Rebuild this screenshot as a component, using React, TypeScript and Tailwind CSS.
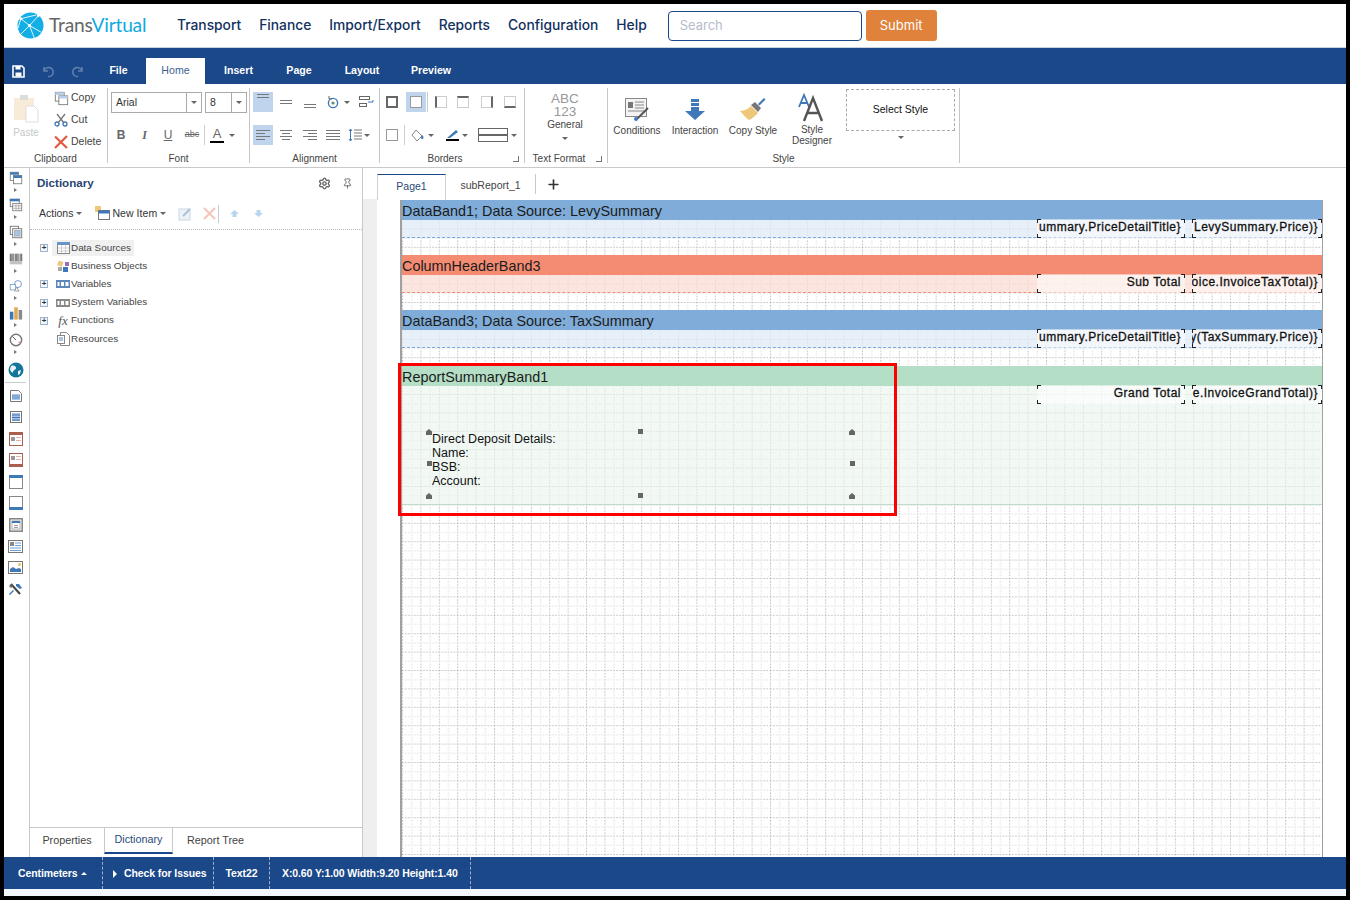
import { Plus, Pin, Settings } from 'lucide-react'
import type { ReactNode } from 'react'

const NAV = ['Transport', 'Finance', 'Import/Export', 'Reports', 'Configuration', 'Help']
const TABS = [
  { label: 'File', w: 'w-[55px]' },
  { label: 'Home', w: 'w-[59px]' },
  { label: 'Insert', w: 'w-[67px]' },
  { label: 'Page', w: 'w-[54px]' },
  { label: 'Layout', w: 'w-[72px]' },
  { label: 'Preview', w: 'w-[66px]' },
]

function Caret({ className = '' }: { className?: string }) {
  return <span className={`inline-block w-0 h-0 border-x-[3px] border-x-transparent border-t-[3px] border-t-[#666] ${className}`} />
}

function Group({ label, w, corner, children }: { label: string; w: string; corner?: boolean; children: ReactNode }) {
  return (
    <div className={`${w} shrink-0 h-[75px] border-r border-[#c6c6c6] flex flex-col relative`}>
      <div className="flex-1 relative">{children}</div>
      <div className={`h-[10px] text-center text-[10px] leading-[12px] text-[#444] whitespace-nowrap ${corner ? 'pr-[14px]' : ''}`}>{label}</div>
      {corner && <span className="absolute right-[5px] bottom-[1px] w-[6px] h-[6px] border-r border-b border-[#777]" />}
    </div>
  )
}

function AlignIcon({ kind }: { kind: string }) {
  const lines = kind === 'left' ? [[1, 14], [1, 9], [1, 14], [1, 9]] : kind === 'center' ? [[2, 12], [4, 8], [2, 12], [4, 8]] : kind === 'right' ? [[1, 14], [6, 9], [1, 14], [6, 9]] : [[1, 14], [1, 14], [1, 14], [1, 14]]
  return (
    <svg width="16" height="12" viewBox="0 0 16 12">
      {lines.map((l, i) => <rect key={i} x={l[0]} y={i * 3 + 1} width={l[1]} height="1" fill="#777" />)}
    </svg>
  )
}

function VAlign({ pos }: { pos: number }) {
  return (
    <svg width="14" height="14" viewBox="0 0 14 14">
      <rect x="1" y={pos} width="12" height="1" fill="#777" />
      <rect x="1" y={pos + 3} width="12" height="1" fill="#777" />
    </svg>
  )
}

function BorderBox({ side, on }: { side: string; on?: boolean }) {
  const cls = side === 'all' ? 'border-2 border-[#666]'
    : side === 'left' ? 'border border-[#ccc] border-l-2 border-l-[#666]'
    : side === 'top' ? 'border border-[#ccc] border-t-2 border-t-[#666]'
    : side === 'right' ? 'border border-[#ccc] border-r-2 border-r-[#666]'
    : side === 'bottom' ? 'border border-[#ccc] border-b-2 border-b-[#666]'
    : 'border border-[#999]'
  return (
    <div className={`w-[20px] h-[20px] flex items-center justify-center ${on ? 'bg-[#c0d4ee]' : ''}`}>
      <span className={`block w-[12px] h-[12px] bg-white ${cls}`} />
    </div>
  )
}

function SmallDoc({ tone }: { tone: string }) {
  return (
    <svg width="15" height="15" viewBox="0 0 17 17">
      <rect x="1.5" y="1.5" width="10" height="10" fill="#fff" stroke="#777" />
      <rect x="1.5" y="1.5" width="10" height="3" fill={tone} />
      <rect x="5.5" y="5.5" width="10" height="10" fill="#fff" stroke="#777" />
      <rect x="5.5" y="5.5" width="10" height="3" fill={tone} />
    </svg>
  )
}

function ToolIcon({ n }: { n: number }) {
  const blue = '#3f78b8'
  const brown = '#a9604f'
  if (n === 0) return <SmallDoc tone={blue} />
  if (n === 1) return (
    <svg width="17" height="17" viewBox="0 0 17 17">
      <rect x="1.5" y="1.5" width="11" height="9" fill="#fff" stroke="#777" /><rect x="1" y="1" width="12" height="3" fill={blue} />
      <rect x="4.5" y="6.5" width="11" height="9" fill="#fff" stroke="#777" /><path d="M5 9.5h10M5 12.5h10M8.5 7v8M12 7v8" stroke="#888" strokeWidth=".7" />
    </svg>
  )
  if (n === 2) return (
    <svg width="17" height="17" viewBox="0 0 17 17">
      <rect x="1.5" y="1.5" width="10" height="10" fill="#fff" stroke="#666" /><rect x="4.5" y="4.5" width="11" height="11" fill="#fff" stroke="#666" />
      <rect x="6.5" y="6.5" width="7" height="7" fill="#a9c4e4" stroke="#888" strokeWidth=".6" />
    </svg>
  )
  if (n === 3) return (
    <svg width="17" height="15" viewBox="0 0 17 15">
      {[1, 3, 4.5, 7, 9, 10.5, 13, 15].map(x => <rect key={x} x={x} y="1" width={x % 2 ? 1 : 1.4} height="9" fill="#333" />)}
      <path d="M1 10h15v4H1z" fill="#999" opacity=".6" />
    </svg>
  )
  if (n === 4) return (
    <svg width="18" height="17" viewBox="0 0 18 17" fill="#fff" stroke="#4f86c4">
      <circle cx="11.5" cy="6" r="4.5" /><rect x="1.5" y="6.5" width="7" height="7" stroke="#6f9acb" /><path d="M10 10l3 5h-6z" stroke="#888" />
    </svg>
  )
  if (n === 5) return (
    <svg width="16" height="15" viewBox="0 0 16 15">
      <rect x="1" y="6" width="4" height="9" fill={blue} /><rect x="6" y="1" width="4" height="14" fill="#e0a94e" /><rect x="11" y="4" width="4" height="11" fill="#8a8a8a" />
    </svg>
  )
  if (n === 6) return (
    <svg width="16" height="16" viewBox="0 0 16 16">
      <circle cx="8" cy="8" r="6.5" fill="#fff" stroke="#777" strokeWidth="1.6" /><path d="M8 8L4 4" stroke="#444" /><path d="M11 11l2-1" stroke="#d0583f" />
    </svg>
  )
  if (n === 7) return (
    <svg width="16" height="16" viewBox="0 0 16 16">
      <circle cx="8" cy="8" r="7.5" fill="#14759b" /><path d="M3 4c3-1 5 0 5 2s-3 2-3 4-3-1-3-3zM10 9l3-1-1 4-2 1z" fill="#e8f2f5" />
    </svg>
  )
  if (n === 8) return (
    <svg width="14" height="14" viewBox="0 0 14 14">
      <path d="M1.5 1.5h8l3 3v8h-11z" fill="#fff" stroke="#777" /><rect x="3" y="5" width="8" height="6" fill="#a9c4e4" /><path d="M3 7h8M3 9h8" stroke="#5d8fc8" />
    </svg>
  )
  if (n === 9) return (
    <svg width="14" height="14" viewBox="0 0 14 14">
      <rect x="1.5" y="1.5" width="11" height="11" fill="#fff" stroke="#777" /><rect x="3" y="3" width="8" height="8" fill="#a9c4e4" /><path d="M3 5h8M3 7.5h8M3 10h8" stroke="#3f78b8" />
    </svg>
  )
  if (n === 10 || n === 11) return (
    <svg width="14" height="14" viewBox="0 0 14 14">
      <rect x=".5" y=".5" width="13" height="13" fill="#fff" stroke={brown} /><rect x="0" y={n === 10 ? 0 : 11} width="14" height="3" fill={brown} />
      <rect x="2" y={n === 10 ? 5 : 3} width="4" height="4" fill="#999" /><rect x="7" y={n === 10 ? 5 : 3} width="5" height="1" fill="#e3b3a8" /><rect x="7" y={n === 10 ? 8 : 6} width="5" height="1" fill="#e3b3a8" />
    </svg>
  )
  if (n === 12 || n === 13) return (
    <svg width="14" height="14" viewBox="0 0 14 14">
      <rect x=".5" y=".5" width="13" height="13" fill="#fff" stroke="#888" /><rect x="0" y={n === 12 ? 0 : 11} width="14" height="3" fill={blue} />
    </svg>
  )
  if (n === 14) return (
    <svg width="14" height="14" viewBox="0 0 14 14">
      <rect x=".75" y=".75" width="12.5" height="12.5" fill="#eee" stroke="#888" strokeWidth="1.5" /><rect x="3" y="3" width="8" height="8" fill="#fff" stroke="#777" strokeWidth=".5" /><rect x="3" y="3" width="8" height="2" fill={blue} /><path d="M5 7.5h4M5 9.5h4" stroke="#999" />
    </svg>
  )
  if (n === 15) return (
    <svg width="15" height="13" viewBox="0 0 15 13">
      <rect x=".5" y=".5" width="14" height="12" fill="#fff" stroke="#777" /><rect x="2" y="2" width="4" height="4" fill="#888" /><path d="M7 3h6M7 5.5h6M2 8h11M2 10.5h11" stroke="#6d9ed4" />
    </svg>
  )
  if (n === 16) return (
    <svg width="15" height="13" viewBox="0 0 15 13">
      <rect x=".5" y=".5" width="14" height="12" fill="#fff" stroke="#777" /><circle cx="11.5" cy="3.5" r="1.5" fill="#f0c060" /><path d="M2 11V8l3-2 3 2 3-1 2 1v3z" fill={blue} />
    </svg>
  )
  return (
    <svg width="15" height="13" viewBox="0 0 15 13">
      <path d="M3 1l9 10" stroke="#444" strokeWidth="2" /><path d="M5 7l-4 4 1 1 4-4zM8 1h3l3 4-2 1-4-3z" fill={blue} /><path d="M1 3l2-2 2 2-2 2z" fill="#666" />
    </svg>
  )
}

function TreeRow({ label, expand, active, icon }: { label: string; expand?: boolean; active?: boolean; icon: ReactNode }) {
  return (
    <div className="flex items-center h-[18.2px] text-[9.9px] text-[#444]">
      <span className="w-[18px] pl-[6px]">
        {expand && (
          <span className="flex w-[8px] h-[8px] border border-[#9db3cf] bg-[#f2f6fb] items-center justify-center text-[8px] leading-none text-[#333] font-bold">+</span>
        )}
      </span>
      <span className={`flex items-center h-[16px] pl-[3px] pr-[3px] ${active ? 'bg-[#f0f0f0]' : ''}`}>
        <span className="w-[16px] flex justify-center">{icon}</span>
        <span>{label}</span>
      </span>
    </div>
  )
}

function TextBox({ left, width, text }: { left: number; width: number; text: string }) {
  return (
    <div className="absolute top-[-1px] h-[19px] bg-white/50 overflow-hidden" style={{ left, width }}>
      <div className="absolute inset-0 flex items-center justify-end pr-[4px] pb-[3px] text-[12px] tracking-[0.5px] whitespace-nowrap text-[#111] [-webkit-text-stroke:0.3px_#111]">
        {text}
      </div>
      <span className="absolute left-0 top-0 w-[4px] h-[4px] border-l border-t border-[#222]" />
      <span className="absolute right-0 top-0 w-[4px] h-[4px] border-r border-t border-[#222]" />
      <span className="absolute left-0 bottom-0 w-[4px] h-[4px] border-l border-b border-[#222]" />
      <span className="absolute right-0 bottom-0 w-[4px] h-[4px] border-r border-b border-[#222]" />
    </div>
  )
}

function Band({ title, head, body, line, cells, gap }: { title: string; head: string; body: string; line: string; cells: [string, string]; gap: string }) {
  return (
    <div className={`${gap} relative`}>
      <div className={`${head} h-[20px] text-[14.4px] leading-[22px] text-[#1b1b1b]`}>{title}</div>
      <div className={`${body} ${line} h-[18px] border-b border-dashed relative`}>
        <TextBox left={635} width={148} text={cells[0]} />
        <TextBox left={790} width={130} text={cells[1]} />
      </div>
    </div>
  )
}

function Handle({ className, corner }: { className: string; corner?: boolean }) {
  if (corner) {
    return <span className={`absolute w-[6px] h-[6px] bg-[#666] [clip-path:polygon(50%_0,100%_40%,100%_100%,0_100%,0_40%)] ${className}`} />
  }
  return <span className={`absolute w-[5px] h-[5px] bg-[#666] ${className}`} />
}

export default function App() {
  return (
    <div className="w-[1350px] h-[900px] bg-black p-[4px] overflow-hidden [font-family:'Liberation_Sans',Arial,sans-serif]">
      <div className="w-[1342px] h-[892px] bg-white flex flex-col">
        {/* top nav */}
        <header className="h-[43px] shrink-0 flex items-center bg-white [font-family:Inter,sans-serif]">
          <div className="w-[173px] pl-[13px] flex items-center">
            <svg width="27" height="27" viewBox="0 0 28 28">
              <circle cx="14" cy="14" r="13.5" fill="#14aee6" />
              <path d="M4 7l16 -4M4 7l9 7 10 -11M13 14l-9 9M13 14l12 7M13 14l5 13M4 7l-3 10" stroke="#fff" strokeWidth="0.9" fill="none" />
              <circle cx="4" cy="7" r="1.6" fill="#fff" /><circle cx="13" cy="14" r="1.6" fill="#fff" /><circle cx="22" cy="4" r="1.4" fill="#fff" />
            </svg>
            <span className="ml-[5px] text-[19.2px] tracking-[-0.2px] text-[#666] [font-family:Lato,sans-serif]">Trans<span className="text-[#11a9e2]">Virtual</span></span>
          </div>
          <nav className="flex gap-[18px] text-[13.8px] font-medium text-[#11315f]">
            {NAV.map(n => <span key={n}>{n}</span>)}
          </nav>
          <div className="ml-[21px] w-[194px] h-[30px] border border-[#1a4788] rounded-[4px] pl-[11px] flex items-center text-[13px] text-[#b4bccb]">Search</div>
          <button className="ml-[4px] w-[71px] h-[31px] rounded-[3px] bg-[#e0823b] text-white text-[13px]">Submit</button>
        </header>

        {/* ribbon tabs */}
        <div className="h-[37px] shrink-0 bg-[#1b4889] flex items-end border-t border-[#c9d3e0]">
          <div className="w-[87px] h-[26px] flex items-center pl-[8px] gap-[16px]">
            <svg width="13" height="13" viewBox="0 0 13 13"><path d="M1 1h9l2 2v9H1z" fill="none" stroke="#fff" strokeWidth="1.6" /><rect x="3.5" y="1" width="5" height="3.5" fill="#fff" /><rect x="3.5" y="7.5" width="6" height="4" fill="#fff" /></svg>
            <svg width="14" height="13" viewBox="0 0 14 13" fill="none" stroke="#5f7fad" strokeWidth="1.6"><path d="M3 2v4h4M3.3 6A4.5 4.5 0 1 1 7 11.5" /></svg>
            <svg width="14" height="13" viewBox="0 0 14 13" fill="none" stroke="#5f7fad" strokeWidth="1.6"><path d="M11 2v4H7M10.7 6A4.5 4.5 0 1 0 7 11.5" /></svg>
          </div>
          {TABS.map(t => (
            <div key={t.label} className={`${t.w} h-[26px] flex items-center justify-center text-[10.6px] font-bold ${t.label === 'Home' ? 'bg-white text-[#3b5f93] font-normal' : 'text-white'}`}>{t.label}</div>
          ))}
        </div>

        {/* ribbon */}
        <div className="h-[84px] shrink-0 bg-white border-b border-[#c9c9c9] flex pt-[4px]">
          <Group label="Clipboard" w="w-[104px]">
            <div className="absolute left-[8px] top-[6px] flex flex-col items-center">
              <svg width="28" height="30" viewBox="0 0 28 30"><rect x="2" y="4" width="20" height="22" fill="#f8ecd9" /><rect x="8" y="1" width="8" height="5" fill="#ddd" /><path d="M14 12h8l4 4v12H14z" fill="#fff" stroke="#ddd" /></svg>
              <span className="text-[10px] text-[#c8c8c8] mt-[1px]">Paste</span>
            </div>
            <div className="absolute left-[50px] top-[2px] flex flex-col gap-[6px] text-[10.5px] text-[#444]">
              <div className="flex items-center h-[16px] gap-[2px]"><SmallDoc tone="#b9cde6" /><span>Copy</span></div>
              <div className="flex items-center h-[16px] gap-[3px]">
                <svg width="14" height="14" viewBox="0 0 14 14" fill="none"><path d="M3 1l7 9M11 1L4 10" stroke="#777" strokeWidth="1.3" /><circle cx="3" cy="11" r="2" stroke="#3f78b8" strokeWidth="1.3" /><circle cx="11" cy="11" r="2" stroke="#3f78b8" strokeWidth="1.3" /></svg>
                <span>Cut</span>
              </div>
              <div className="flex items-center h-[16px] gap-[3px]">
                <svg width="14" height="14" viewBox="0 0 14 14"><path d="M1 1.5L13 13M13 1L1 13" stroke="#e2583e" strokeWidth="2.2" /></svg>
                <span>Delete</span>
              </div>
            </div>
          </Group>
          <Group label="Font" w="w-[142px]">
            <div className="absolute left-[3px] top-[4px] flex gap-[3px]">
              <div className="w-[91px] h-[21px] border border-[#aaa] flex text-[10.5px] text-[#333]"><span className="flex-1 pl-[4px] leading-[19px]">Arial</span><span className="w-[15px] border-l border-[#aaa] flex items-center justify-center"><Caret /></span></div>
              <div className="w-[42px] h-[21px] border border-[#aaa] flex text-[10.5px] text-[#333]"><span className="flex-1 pl-[4px] leading-[19px]">8</span><span className="w-[15px] border-l border-[#aaa] flex items-center justify-center"><Caret /></span></div>
            </div>
            <div className="absolute left-[1px] top-[37px] flex items-center h-[20px] text-[#666]">
              <span className="w-[24px] text-center font-bold text-[12px]">B</span>
              <span className="w-[23px] text-center italic font-bold text-[12px] [font-family:'Liberation_Serif',serif]">I</span>
              <span className="w-[24px] text-center underline text-[12px]">U</span>
              <span className="w-[24px] text-center line-through text-[9px]">abc</span>
              <span className="w-[1px] h-[20px] bg-[#ccc]" />
              <span className="ml-[5px] w-[14px] text-center text-[13px] leading-[14px] border-b-2 border-black">A</span>
              <Caret className="ml-[5px]" />
            </div>
          </Group>
          <Group label="Alignment" w="w-[130px]">
            <div className="absolute left-[3px] top-[4px] flex items-center h-[20px]">
              <div className="w-[20px] h-[20px] bg-[#c0d4ee] flex justify-center"><VAlign pos={2} /></div>
              <div className="ml-[3px] w-[20px] flex justify-center"><VAlign pos={5} /></div>
              <div className="ml-[4px] w-[20px] flex justify-center"><VAlign pos={9} /></div>
              <svg className="ml-[6px]" width="14" height="14" viewBox="0 0 14 14" fill="none"><circle cx="7" cy="8" r="4.6" stroke="#3f78b8" strokeWidth="1.4" /><circle cx="7" cy="8" r="1.6" fill="#5d8f7a" /><path d="M3 1v3h3" stroke="#666" /></svg>
              <Caret className="ml-[4px]" />
              <svg className="ml-[9px]" width="15" height="14" viewBox="0 0 15 14" fill="none" stroke="#666"><rect x=".5" y="1.5" width="10" height="3" /><rect x=".5" y="8.5" width="7" height="3" /><path d="M14 5v2H9" stroke="#3f78b8" /></svg>
            </div>
            <div className="absolute left-[3px] top-[37px] flex items-center h-[20px]">
              <div className="w-[20px] h-[20px] bg-[#c0d4ee] flex items-center justify-center"><AlignIcon kind="left" /></div>
              <div className="ml-[3px] w-[20px] flex justify-center"><AlignIcon kind="center" /></div>
              <div className="ml-[4px] w-[20px] flex justify-center"><AlignIcon kind="right" /></div>
              <div className="ml-[3px] w-[20px] flex justify-center"><AlignIcon kind="full" /></div>
              <svg className="ml-[5px]" width="14" height="14" viewBox="0 0 14 14" fill="none"><path d="M2.5 1v12" stroke="#3f78b8" /><path d="M1 3l1.5-2L4 3M1 11l1.5 2L4 11" stroke="#3f78b8" /><path d="M6 2h8M6 5h8M6 8h8M6 11h8" stroke="#777" /></svg>
              <Caret className="ml-[2px]" />
            </div>
          </Group>
          <Group label="Borders" w="w-[145px]" corner>
            <div className="absolute left-[2px] top-[4px] flex items-center">
              <BorderBox side="all" />
              <span className="ml-[4px]"><BorderBox side="none" on /></span>
              <span className="w-[1px] h-[20px] bg-[#ccc] ml-[1px]" />
              <span className="ml-[3px]"><BorderBox side="left" /></span>
              <span className="ml-[2px]"><BorderBox side="top" /></span>
              <span className="ml-[4px]"><BorderBox side="right" /></span>
              <span className="ml-[3px]"><BorderBox side="bottom" /></span>
            </div>
            <div className="absolute left-[2px] top-[37px] flex items-center">
              <BorderBox side="none" />
              <span className="w-[1px] h-[20px] bg-[#ccc] ml-[2px]" />
              <svg className="ml-[4px]" width="15" height="15" viewBox="0 0 15 15" fill="none"><path d="M3 7l4-5 6 6-5 5z" stroke="#888" /><path d="M12 9c0 3 2.500 3 2.500 0l-1-2z" fill="#3f78b8" /></svg>
              <Caret className="ml-[4px]" />
              <span className="ml-[12px] flex flex-col items-center w-[13px]"><svg width="13" height="10" viewBox="0 0 13 10"><path d="M1 9l9-8 2 2-8 6z" fill="#3f78b8" /></svg><span className="w-[13px] h-[2px] bg-black" /></span>
              <Caret className="ml-[3px]" />
              <span className="ml-[10px] w-[30px] h-[14px] border border-[#666] flex items-center"><span className="w-full h-[2px] bg-[#666]" /></span>
              <Caret className="ml-[3px]" />
            </div>
          </Group>
          <Group label="Text Format" w="w-[83px]" corner>
            <div className="absolute inset-x-0 top-[4px] flex flex-col items-center pr-[2px]">
              <span className="text-[13.5px] leading-[13px] text-center text-[#999]">ABC<br />123</span>
              <span className="text-[10px] leading-[13px] text-[#444]">General</span>
              <Caret className="mt-[6px]" />
            </div>
          </Group>
          <Group label="Style" w="w-[352px]">
            <div className="absolute left-[5px] top-[8px] w-[48px] flex flex-col items-center text-[10px] text-[#444]">
              <svg width="26" height="26" viewBox="0 0 26 26"><rect x="1.5" y="2.5" width="21" height="18" fill="#f3f3f3" stroke="#888" /><rect x="4" y="6" width="5" height="6" fill="#777" /><path d="M11 6h9M11 9h9M11 12h9M4 15h16" stroke="#888" /><path d="M24 12L13 23" stroke="#555" strokeWidth="2" /><circle cx="12" cy="23" r="2" fill="#3f78b8" /></svg>
              <span className="mt-[1px] whitespace-nowrap">Conditions</span>
            </div>
            <div className="absolute left-[63px] top-[8px] w-[48px] flex flex-col items-center text-[10px] text-[#444]">
              <svg width="26" height="26" viewBox="0 0 26 26" fill="#3f78b8"><rect x="9" y="3" width="8" height="3" /><rect x="9" y="7" width="8" height="3" /><path d="M9 11h8v4h6L13 24 3 15h6z" /></svg>
              <span className="mt-[1px] whitespace-nowrap">Interaction</span>
            </div>
            <div className="absolute left-[120px] top-[8px] w-[50px] flex flex-col items-center text-[10px] text-[#444]">
              <svg width="28" height="26" viewBox="0 0 28 26"><path d="M1 15c5 0 9-3 11-5l7 7c-3 3-6 6-9 7-3-2-6-6-9-9z" fill="#efc77a" /><path d="M12 9l4-3 6 6-3 4z" fill="#777" /><path d="M19 8l6-6 1.500 1.500-6 6z" fill="#3f78b8" /></svg>
              <span className="mt-[1px] whitespace-nowrap">Copy Style</span>
            </div>
            <div className="absolute left-[179px] top-[5px] w-[50px] flex flex-col items-center text-[10px] leading-[11px] text-[#444] text-center">
              <svg width="28" height="29" viewBox="0 0 28 29" fill="none">
                <path d="M1 14L6 2l5 12M3 10h6" stroke="#3f78b8" strokeWidth="1.8" />
                <path d="M6 28L15 5l9 23M9 20h12" stroke="#555" strokeWidth="2.4" />
              </svg>
              <span className="mt-[2px]">Style<br />Designer</span>
            </div>
            <div className="absolute left-[238px] top-[1px] w-[109px] h-[42px] border border-dashed border-[#aaa] flex items-center justify-center text-[10.5px] text-[#111]">Select Style</div>
            <Caret className="absolute left-[290px] top-[48px]" />
          </Group>
        </div>

        {/* body */}
        <div className="flex-1 flex min-h-0 bg-white">
          <div className="w-[26px] shrink-0 border-r border-[#c9c9c9] flex flex-col items-center pt-[1px] pr-[2px]">
            {[0, 1, 2, 3, 4, 5, 6].map(n => (
              <div key={n} className="flex flex-col items-center h-[27px] [&_svg]:w-[14px] [&_svg]:h-[14px]">
                <div className="h-[17px] flex items-center"><ToolIcon n={n} /></div>
                <span className="w-0 h-0 border-y-[2.5px] border-y-transparent border-l-[3px] border-l-[#777] mt-[2px]" />
              </div>
            ))}
            <div className="h-[17px] mt-[3px] flex items-center"><ToolIcon n={7} /></div>
            <div className="w-[21px] h-[1px] bg-[#ccc] mt-[4px] mb-[2px]" />
            {[8, 9, 10, 11, 12, 13, 14, 15, 16, 17].map(n => (
              <div key={n} className="h-[21.5px] flex items-center"><ToolIcon n={n} /></div>
            ))}
          </div>

          <aside className="w-[333px] shrink-0 flex flex-col border-r border-[#c9c9c9]">
            <div className="h-[30px] pl-[7px] pr-[9px] flex items-center justify-between">
              <span className="text-[11.6px] font-bold text-[#2a4570]">Dictionary</span>
              <span className="flex items-center gap-[11px] text-[#666]"><Settings size={13} strokeWidth={2.6} /><Pin size={11} strokeWidth={2} /></span>
            </div>
            <div className="h-[31px] ml-[9px] flex items-center text-[10.5px] text-[#333]">
              <span>Actions</span><Caret className="ml-[3px]" />
              <span className="ml-[13px] flex"><svg width="15" height="15" viewBox="0 0 15 15"><rect x="0" y="0" width="6" height="6" fill="#eec878" /><rect x="3.5" y="4.500" width="11" height="9" fill="#fff" stroke="#777" /><rect x="3.5" y="4.500" width="11" height="3" fill="#3f78b8" /></svg></span>
              <span className="ml-[2px] tracking-[0.05px]">New Item</span><Caret className="ml-[3px]" />
              <svg className="ml-[12px]" width="14" height="14" viewBox="0 0 14 14" fill="none"><rect x="1" y="2" width="11" height="11" stroke="#cbd6e4" fill="#edf2f8" /><path d="M5 9l7-7" stroke="#a8c0dc" strokeWidth="2" /></svg>
              <svg className="ml-[11px]" width="13" height="13" viewBox="0 0 13 13"><path d="M1 1l11 11M12 1L1 12" stroke="#f3c5ba" strokeWidth="2" /></svg>
              <span className="ml-[2px] w-[1px] h-[18px] bg-[#ccc]" />
              <svg className="ml-[10px]" width="11" height="9" viewBox="0 0 11 9"><path d="M5.500 1L10 5H7.500v3h-4V5H1z" fill="#b7d6f0" /></svg>
              <svg className="ml-[13px]" width="11" height="9" viewBox="0 0 11 9"><path d="M5.500 8L10 4H7.500V1h-4v3H1z" fill="#b7d6f0" /></svg>
            </div>
            <div className="border-t border-dotted border-[#b9b9b9]" />
            <div className="pt-[9px] pl-[4px]">
              <TreeRow label="Data Sources" expand active icon={<svg width="13" height="12" viewBox="0 0 13 12"><rect x=".5" y=".5" width="12" height="11" fill="#fff" stroke="#888" /><rect x="0" y="0" width="13" height="3" fill="#6a94c7" /><path d="M1 6h11M1 9h11M4.500 3v8M8.500 3v8" stroke="#bbb" strokeWidth=".7" /></svg>} />
              <TreeRow label="Business Objects" icon={<svg width="13" height="13" viewBox="0 0 13 13"><rect x="1" y="1" width="5" height="5" fill="#eec878" transform="rotate(20 3 3)" /><rect x="8" y="2" width="4" height="4" fill="#9a6cc0" /><rect x="6" y="7" width="5" height="5" fill="#3f78b8" /><rect x="1" y="7" width="4" height="4" fill="#aaa" /></svg>} />
              <TreeRow label="Variables" expand icon={<svg width="14" height="8" viewBox="0 0 14 8"><rect width="14" height="8" fill="#5d86ba" /><rect x="1.500" y="2" width="2" height="4" fill="#fff" /><rect x="5" y="2" width="3" height="4" fill="#fff" /><rect x="9.500" y="2" width="3" height="4" fill="#fff" /></svg>} />
              <TreeRow label="System Variables" expand icon={<svg width="14" height="8" viewBox="0 0 14 8"><rect width="14" height="8" fill="#888" /><rect x="1.500" y="2" width="2" height="4" fill="#fff" /><rect x="5" y="2" width="3" height="4" fill="#fff" /><rect x="9.500" y="2" width="3" height="4" fill="#fff" /></svg>} />
              <TreeRow label="Functions" expand icon={<span className="italic text-[13px] leading-none text-[#555] [font-family:'Liberation_Serif',serif]">fx</span>} />
              <TreeRow label="Resources" icon={<svg width="13" height="14" viewBox="0 0 13 14"><path d="M3.500.5h6l3 3v10h-9z" fill="#fff" stroke="#888" /><rect x=".5" y="3.500" width="7" height="8" fill="#fff" stroke="#888" /><path d="M2 6h4M2 8h4" stroke="#5d86ba" /></svg>} />
            </div>
            <div className="mt-auto h-[30px] border-t border-[#c9c9c9] flex items-start text-[10.8px] text-[#444]">
              <span className="w-[74px] h-[26px] pb-[1px] flex items-center justify-center">Properties</span>
              <span className="w-[69px] h-[26px] pb-[1px] flex items-center justify-center text-[#2a4a7a] border-x border-[#c9c9c9] border-b-2 border-b-[#1b4889]">Dictionary</span>
              <span className="w-[85px] h-[26px] pb-[1px] flex items-center justify-center">Report Tree</span>
            </div>
          </aside>

          <div className="w-[14px] shrink-0 flex flex-col">
            <div className="h-[31px] bg-white" />
            <div className="flex-1 bg-[#efefef]" />
          </div>

          <main className="flex-1 min-w-0 flex flex-col">
            <div className="h-[32px] shrink-0 flex items-end text-[10.5px] bg-white">
              <span className="w-[69px] h-[26px] pb-[2px] border-t border-t-[#1b4889] border-x border-x-[#d0d0d0] flex items-center justify-center text-[#2a4a7a]">Page1</span>
              <span className="w-[89px] h-[26px] pb-[2px] flex items-center justify-center text-[#444]">subReport_1</span>
              <span className="w-[1px] h-[20px] mb-[6px] bg-[#c9c9c9]" />
              <span className="w-[34px] h-[26px] pb-[6px] flex items-center justify-center text-[#333]"><Plus size={15} strokeWidth={2.6} /></span>
            </div>
            <div className="flex-1 min-h-0 pl-[23px] relative overflow-hidden">
              <div className="w-[923px] h-full bg-white border-l-2 border-r border-[#a0a0a0] relative">
                {/* dotted design grid */}
                <svg className="absolute inset-0 w-full h-full" aria-hidden="true">
                  <defs>
                    <pattern id="designGrid" width="18.4" height="18.4" patternUnits="userSpaceOnUse" patternTransform="translate(0 10)">
                      <path d="M.5 0v18.4M0 .5h18.4" stroke="#bcbcbc" strokeDasharray="1.5 1.5" />
                      <path d="M9.700 0v18.4M0 9.700h18.4" stroke="#dcdcdc" strokeDasharray="1.5 1.5" />
                    </pattern>
                  </defs>
                  <rect width="100%" height="100%" fill="url(#designGrid)" />
                </svg>
                <div className="relative">
                  <Band title="DataBand1; Data Source: LevySummary" head="bg-[#78a8d6]/95" body="bg-[#dfe9f6]/75" line="border-[#7aa8d8]" gap="h-[55px]" cells={['ummary.PriceDetailTitle}', 'LevySummary.Price)}']} />
                  <Band title="ColumnHeaderBand3" head="bg-[#f2866b]/95" body="bg-[#fbdcd3]/75" line="border-[#ee8f77]" gap="h-[55px]" cells={['Sub Total', 'oice.InvoiceTaxTotal)}']} />
                  <Band title="DataBand3; Data Source: TaxSummary" head="bg-[#78a8d6]/95" body="bg-[#dfe9f6]/75" line="border-[#7aa8d8]" gap="h-[56px]" cells={['ummary.PriceDetailTitle}', 'y(TaxSummary.Price)}']} />
                  <div className="bg-[#b0dcc2]/95 h-[20px] text-[14.4px] leading-[22px] text-[#1b1b1b]">ReportSummaryBand1</div>
                  <div className="bg-[#e9f5ee]/60 h-[119px] border-b border-[#bfdccb] relative">
                    <TextBox left={635} width={148} text="Grand Total" />
                    <TextBox left={790} width={130} text="e.InvoiceGrandTotal)}" />
                    <div className="absolute left-[30px] top-[46px] text-[12.5px] leading-[14px] text-[#111]">
                      Direct Deposit Details:<br />Name:<br />BSB:<br />Account:
                    </div>
                    <Handle corner className="left-[24px] top-[43px]" />
                    <Handle className="left-[236px] top-[43px]" />
                    <Handle corner className="left-[447px] top-[43px]" />
                    <Handle className="left-[25px] top-[75px]" />
                    <Handle className="left-[448px] top-[75px]" />
                    <Handle corner className="left-[24px] top-[107px]" />
                    <Handle className="left-[236px] top-[107px]" />
                    <Handle corner className="left-[447px] top-[107px]" />
                  </div>
                </div>
              </div>
              {/* red highlight drawn on top of the screenshot */}
              <div className="absolute left-[21px] top-[163px] w-[499px] h-[153px] border-[3px] border-[#f00] pointer-events-none" />
            </div>
          </main>
        </div>

        {/* status bar */}
        <div className="h-[32px] shrink-0 bg-[#1b4889] flex items-center text-[10.5px] font-bold tracking-[-0.1px] text-white">
          <span className="w-[99px] h-full pl-[14px] pt-[1px] flex items-center gap-[3px] border-r border-dashed border-[#9fb3d1]">Centimeters<span className="w-0 h-0 border-x-[3px] border-x-transparent border-b-[3px] border-b-white" /></span>
          <span className="w-[111px] h-full pl-[10px] pt-[1px] flex items-center gap-[7px] border-r border-dashed border-[#9fb3d1]"><span className="w-0 h-0 border-y-[4px] border-y-transparent border-l-[4px] border-l-white" />Check for Issues</span>
          <span className="w-[56px] h-full pt-[1px] flex items-center justify-center border-r border-dashed border-[#9fb3d1]">Text22</span>
          <span className="w-[201px] h-full pl-[12px] pt-[1px] flex items-center border-r border-dashed border-[#9fb3d1]">X:0.60 Y:1.00 Width:9.20 Height:1.40</span>
        </div>
        <div className="h-[7px] shrink-0 bg-[#f3f7fd]" />
      </div>
    </div>
  )
}
